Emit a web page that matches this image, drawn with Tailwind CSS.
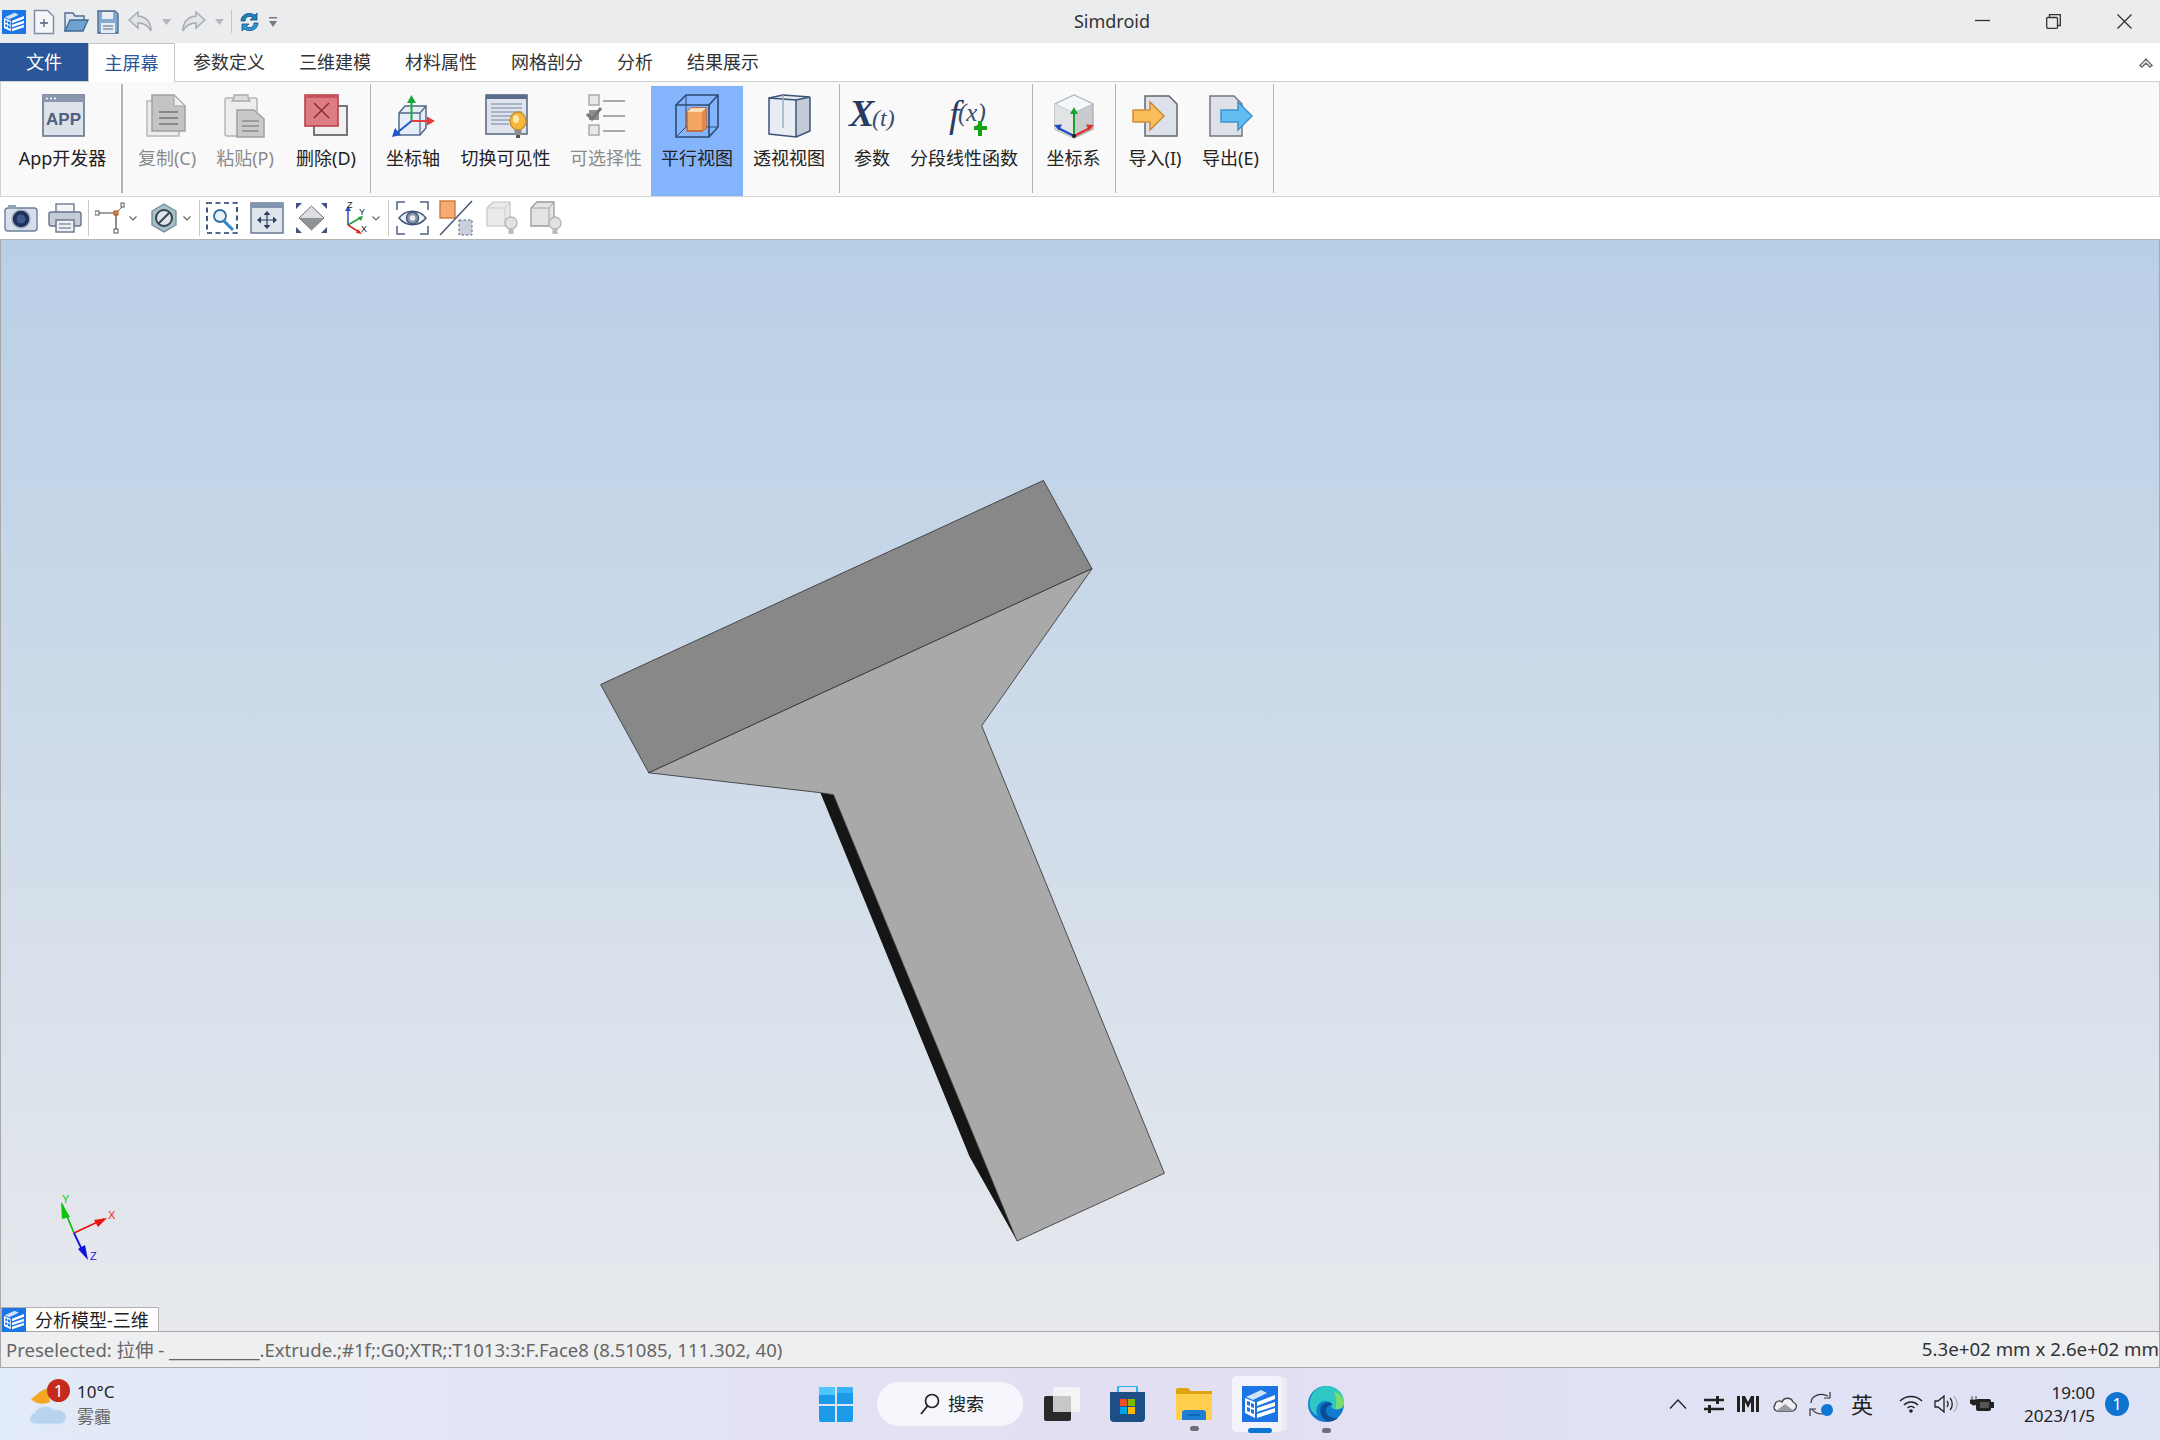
<!DOCTYPE html>
<html lang="zh-CN">
<head>
    <meta charset="UTF-8">
    <title>Simdroid</title>
    <script src="https://cdn.jsdelivr.net/npm/@tailwindcss/browser@4"></script>
</head>
<body class="m-0 overflow-hidden">
    <!-- Shared app logo -->
    <svg class="hidden">
        <symbol id="logo" viewBox="0 0 36 36">
            <rect width="36" height="36" fill="#1b75e6"/>
            <path d="M4 11 19 4l6 3-14 7z" fill="#cfe2fb"/>
            <path d="M3 12l10 4v16L3 27z" fill="#fff"/>
            <path d="M5 15l3 1v4l-3-1zM9 17l3 1v4l-3-1zM5 21l3 1v4l-3-1zM9 23l3 1v4l-3-1z" fill="#1b75e6"/>
            <path d="M15 16 33 9v4l-18 7zM15 22l18-6v4l-18 6zM15 28l18-6v4l-18 6z" fill="#fff"/>
        </symbol>
    </svg>

    <div class="w-[2160px] h-[1440px] flex flex-col text-[18px] text-[#222] font-['Noto_Sans','Noto_Sans_CJK_SC',sans-serif]">

        <!-- Title bar -->
        <div class="h-[43px] shrink-0 flex items-center bg-[#ebecee]">
            <div class="w-[1073px] flex items-center">
                <svg class="ml-[2px] w-[24px] h-[24px]"><use href="#logo"/></svg>
                <svg class="ml-[7px]" width="22" height="26" viewBox="0 0 22 26"><path d="M1.500 1.500h13l6 6v17h-19z" fill="#f4f6fa" stroke="#7d8aa3" stroke-width="1.400"/><path d="M7 14h8M11 10v8" stroke="#4f5f7c" stroke-width="1.300"/></svg>
                <svg class="ml-[9px]" width="25" height="24" viewBox="0 0 25 24"><path d="M1 21V3h8l2 3h9v4" fill="#dfe6f0" stroke="#4d6c90" stroke-width="1.400"/><path d="M1 21 6 10h18l-5 11z" fill="#6ea3cf" stroke="#3f6a92" stroke-width="1.400"/></svg>
                <svg class="ml-[8px]" width="22" height="24" viewBox="0 0 22 24"><path d="M1 1h17l3 3v19H1z" fill="#86a9cf" stroke="#4c6c92" stroke-width="1.400"/><path d="M5 2h11v7H5z" fill="#e9eef5"/><path d="M4 13h14v10H4z" fill="#e6ebf2"/><path d="M6 16h10M6 19h10" stroke="#7f93ad" stroke-width="1.300"/></svg>
                <svg class="ml-[9px]" width="25" height="22" viewBox="0 0 25 22"><path d="M10 1 1 9l9 8v-5c6 0 10 2 13 8 0-9-5-14-13-15z" fill="#e3e4e6" stroke="#a8abb0" stroke-width="1.500"/></svg>
                <svg class="ml-[9px]" width="9" height="6" viewBox="0 0 9 6"><path d="M0 0h9L4.500 6z" fill="#b4b6ba"/></svg>
                <svg class="ml-[10px]" width="25" height="22" viewBox="0 0 25 22"><path d="M15 1l9 8-9 8v-5C9 12 5 14 2 20 2 11 7 6 15 5z" fill="#e3e4e6" stroke="#a8abb0" stroke-width="1.500"/></svg>
                <svg class="ml-[9px]" width="9" height="6" viewBox="0 0 9 6"><path d="M0 0h9L4.500 6z" fill="#b4b6ba"/></svg>
                <div class="ml-[7px] w-px h-[23px] bg-[#c4c5c8]"></div>
                <svg class="ml-[7px]" width="21" height="22" viewBox="0 0 21 22"><path d="M2 10C2 4 9 0 16 4l2-2v7h-7l3-2.500C10 4 6 6 6 10z" fill="#1f7fc0" stroke="#12527e" stroke-width=".8"/><path d="M19 12c0 6-7 10-14 6l-2 2v-7h7l-3 2.500c4 2.500 8 .5 8-3.500z" fill="#2b95d6" stroke="#12527e" stroke-width=".8"/></svg>
                <svg class="ml-[9px]" width="8" height="10" viewBox="0 0 8 10"><path d="M0 0h8v1.500H0zM0 4h8L4 10z" fill="#77797d"/></svg>
            </div>
            <span class="w-[78px] text-center text-[#333] text-[18px]">Simdroid</span>
            <div class="ml-auto mr-[28px] flex items-center gap-[56px]">
                <svg width="15" height="15" viewBox="0 0 15 15"><path d="M0 6.500h15" stroke="#333" stroke-width="1.300"/></svg>
                <svg width="15" height="15" viewBox="0 0 15 15" fill="none" stroke="#333" stroke-width="1.300"><rect x=".7" y="3.500" width="10.800" height="10.800" rx="1"/><path d="M3.500 3.500V.7h10.800v10.800h-2.800"/></svg>
                <svg width="15" height="15" viewBox="0 0 15 15"><path d="M.5.5l14 14M14.500.5l-14 14" stroke="#333" stroke-width="1.300"/></svg>
            </div>
        </div>

        <!-- Ribbon tabs -->
        <div class="h-[39px] shrink-0 flex items-center bg-white border-b border-[#cfcfcf]">
            <div class="w-[88px] h-[38px] pt-[1px] flex items-center justify-center bg-[#2b579a] text-white">文件</div>
            <div class="w-[87px] h-[39px] pt-[1px] flex items-center justify-center bg-white border-x border-t border-[#c4c4c4] text-[#2b579a] relative top-[0.5px]">主屏幕</div>
            <div class="pl-[18px] pt-[1px] flex items-center gap-[34px] text-[#333]">
                <span>参数定义</span>
                <span>三维建模</span>
                <span>材料属性</span>
                <span>网格剖分</span>
                <span>分析</span>
                <span>结果展示</span>
            </div>
            <svg class="ml-auto mr-[7px]" width="14" height="11" viewBox="0 0 14 11"><path d="M1 8.500 7 2l6 6.500-2 1.500-4-4-4 4z" fill="#fff" stroke="#6d7075" stroke-width="1.500"/></svg>
        </div>

        <!-- Ribbon buttons -->
        <div class="h-[115px] shrink-0 flex bg-[#f9f9f9] border-b border-x border-[#d2d2d2] whitespace-nowrap">
            <!-- App -->
            <div class="ml-[3px] w-[117px] h-[110px] mt-[4px] flex flex-col items-center pt-[7px]">
                <svg width="46" height="46" viewBox="0 0 46 46"><rect x="3" y="2" width="41" height="41" fill="#dde1e9" stroke="#66748f" stroke-width="1.600"/><rect x="3" y="2" width="41" height="7" fill="#8a97ad"/><path d="M6 5.500h2M10 5.500h2M14 5.500h2" stroke="#fff" stroke-width="1.500"/><text x="23.500" y="32" text-anchor="middle" font-family="Liberation Sans" font-weight="700" font-size="17" fill="#50607f">APP</text></svg>
                <span class="mt-[7px] leading-[24px]">App开发器</span>
            </div>
            <div class="w-[2px] h-[109px] mt-[2px] bg-[#b4b4b4]"></div>
            <!-- Copy / paste / delete -->
            <div class="ml-[5px] w-[78px] h-[110px] mt-[4px] flex flex-col items-center pt-[7px] text-[#8b8b8b]">
                <svg width="46" height="46" viewBox="0 0 46 46"><rect x="3" y="8" width="32" height="35" fill="#ececec" stroke="#b9b9b9" stroke-width="1.500"/><path d="M8 2h22l11 11v25H8z" fill="#c4c4c4" stroke="#a0a0a0" stroke-width="1.500"/><path d="M30 2v11h11z" fill="#eee" stroke="#a0a0a0"/><path d="M15 19h19M15 25h19M15 31h19" stroke="#888" stroke-width="1.800"/></svg>
                <span class="mt-[7px] leading-[24px]">复制(C)</span>
            </div>
            <div class="w-[78px] h-[110px] mt-[4px] flex flex-col items-center pt-[7px] text-[#8b8b8b]">
                <svg width="46" height="46" viewBox="0 0 46 46"><rect x="3" y="5" width="32" height="38" rx="2" fill="#ededed" stroke="#b5b5b5" stroke-width="1.500"/><path d="M12 5V2h14v3l2 3H10z" fill="#dcdcdc" stroke="#aaa" stroke-width="1.300"/><path d="M15 17h17l10 9v18H15z" fill="#c9c9c9" stroke="#a0a0a0" stroke-width="1.500"/><path d="M20 28h17M20 33h17M20 38h17" stroke="#8d8d8d" stroke-width="1.600"/></svg>
                <span class="mt-[7px] leading-[24px]">粘贴(P)</span>
            </div>
            <div class="w-[84px] h-[110px] mt-[4px] flex flex-col items-center pt-[7px]">
                <svg width="46" height="46" viewBox="0 0 46 46"><rect x="11" y="13" width="33" height="29" fill="#f1f1f1" stroke="#6a6a6a" stroke-width="1.800"/><rect x="2" y="2" width="33" height="31" fill="#dd7c83" stroke="#b9434c" stroke-width="1.600"/><path d="M2 2h33v3H2z" fill="#c9525b"/><path d="M11 10l15 15M26 10 11 25" stroke="#8f2c34" stroke-width="1.500"/></svg>
                <span class="mt-[7px] leading-[24px]">删除(D)</span>
            </div>
            <div class="ml-[2px] w-px h-[109px] mt-[2px] bg-[#b4b4b4]"></div>
            <!-- Axis / visibility -->
            <div class="ml-[5px] w-[74px] h-[110px] mt-[4px] flex flex-col items-center pt-[7px]">
                <svg width="46" height="46" viewBox="0 0 46 46"><path d="M9 20l6-7h21v22l-6 7H9z" fill="#e6eef8" stroke="#53688a" stroke-width="1.500"/><path d="M9 20h21v22M30 20l6-7" fill="none" stroke="#53688a" stroke-width="1.300"/><path d="M21.500 28V9" stroke="#18a83e" stroke-width="2"/><path d="M21.500 2l4.500 8h-9z" fill="#18a83e"/><path d="M21.500 28H38" stroke="#e83a3a" stroke-width="2"/><path d="M45 28l-8 4.500v-9z" fill="#e83a3a"/><path d="M21.500 28 8 39" stroke="#1f58c8" stroke-width="2"/><path d="M2 44l3-9 6 7z" fill="#1f58c8"/></svg>
                <span class="mt-[7px] leading-[24px]">坐标轴</span>
            </div>
            <div class="w-[111px] h-[110px] mt-[4px] flex flex-col items-center pt-[7px]">
                <svg width="46" height="46" viewBox="0 0 46 46"><rect x="3" y="2" width="41" height="39" fill="#dfe4ec" stroke="#5a6d8c" stroke-width="1.600"/><rect x="3" y="2" width="41" height="4" fill="#5a6d8c"/><path d="M8 11h31M8 15h31M8 19h31M8 23h22M8 27h20M8 31h18" stroke="#97a4b8" stroke-width="1.500"/><ellipse cx="35" cy="28" rx="8" ry="9" fill="#f6b73c" stroke="#c68b2a" stroke-width="1.300"/><ellipse cx="33" cy="26" rx="3" ry="4" fill="#fde9a8"/><rect x="31.500" y="37" width="7" height="5" fill="#8b8d92"/><path d="M33 42h4v3h-4z" fill="#555"/></svg>
                <span class="mt-[7px] leading-[24px]">切换可见性</span>
            </div>
            <div class="w-[90px] h-[110px] mt-[4px] flex flex-col items-center pt-[7px] text-[#8b8b8b]">
                <svg width="46" height="46" viewBox="0 0 46 46"><g fill="#e8e8e8" stroke="#aaa" stroke-width="1.500"><rect x="6" y="2" width="10" height="10"/><rect x="6" y="32" width="10" height="10"/></g><rect x="6" y="17" width="10" height="10" fill="#8f8f8f"/><path d="M4 21l5 5 9-11" fill="none" stroke="#777" stroke-width="3"/><path d="M20 8h22M20 23h22M20 38h22" stroke="#a9a9a9" stroke-width="2"/></svg>
                <span class="mt-[7px] leading-[24px]">可选择性</span>
            </div>
            <!-- Parallel view is the active one -->
            <div class="w-[92px] h-[110px] mt-[4px] flex flex-col items-center pt-[7px] bg-[#84b4fb]">
                <svg width="46" height="46" viewBox="0 0 46 46"><g fill="none" stroke="#2d4a78" stroke-width="1.600"><path d="M2 12h33v32H2zM2 12 12 2h32v32L35 44M35 12l9-10"/><path d="M12 2v32h32M12 34 2 44" stroke-width="1"/></g><path d="M13 19l4-4h15v20l-4 3H13z" fill="#f3a765" stroke="#c35a22" stroke-width="1.300"/><path d="M17 15h15l-4 4H13z" fill="#fbdcb7"/><path d="M28 19l4-4v20l-4 3z" fill="#e28a45"/></svg>
                <span class="mt-[7px] leading-[24px]">平行视图</span>
            </div>
            <div class="w-[92px] h-[110px] mt-[4px] flex flex-col items-center pt-[7px]">
                <svg width="46" height="46" viewBox="0 0 46 46"><path d="M3 5l14-3 27 2v34l-14 6-27-3z" fill="#e8ecf3"/><path d="M30 7l14-3v34l-14 6z" fill="#c5cbd6"/><g fill="none" stroke="#3d5378" stroke-width="1.500"><path d="M3 5l27 2v37L3 41z"/><path d="M3 5l14-3 27 2-14 3M44 4v34l-14 6"/><path d="M17 2v33" stroke="#a0acc0"/></g></svg>
                <span class="mt-[7px] leading-[24px]">透视视图</span>
            </div>
            <div class="ml-[4px] w-px h-[109px] mt-[2px] bg-[#b4b4b4]"></div>
            <!-- Parameters -->
            <div class="ml-[5px] w-[54px] h-[110px] mt-[4px] flex flex-col items-center pt-[7px]">
                <svg width="50" height="46" viewBox="0 0 50 46"><text x="2" y="33" font-family="Liberation Serif" font-style="italic" font-weight="700" font-size="38" fill="#283c63">X</text><text x="25" y="33" font-family="Liberation Serif" font-style="italic" font-size="24" fill="#3b4d70">(t)</text></svg>
                <span class="mt-[7px] leading-[24px]">参数</span>
            </div>
            <div class="w-[130px] h-[110px] mt-[4px] flex flex-col items-center pt-[7px]">
                <svg width="48" height="46" viewBox="0 0 48 46"><text x="9" y="34" font-family="Liberation Serif" font-style="italic" font-size="38" fill="#283c63">f</text><text x="18" y="28" font-family="Liberation Serif" font-style="italic" font-size="25" fill="#3b4d70">(x)</text><path d="M32 34h4v-5h4v5h5v4h-5v6h-4v-6h-4z" fill="#12a312" transform="translate(2 -1)"/></svg>
                <span class="mt-[7px] leading-[24px]">分段线性函数</span>
            </div>
            <div class="ml-[3px] w-px h-[109px] mt-[2px] bg-[#b4b4b4]"></div>
            <!-- Coordinate system -->
            <div class="ml-[6px] w-[69px] h-[110px] mt-[4px] flex flex-col items-center pt-[7px]">
                <svg width="46" height="46" viewBox="0 0 46 46"><path d="M23 2l19 9v25l-19 9-19-9V11z" fill="#c9cbce" stroke="#a9acb1" stroke-width="1.300"/><path d="M4 11l19 9 19-9-19-9z" fill="#f5f6f7" stroke="#aeb8c6"/><path d="M23 20v25L4 36V11z" fill="#e2e3e5"/><path d="M23 42V19" stroke="#17a32a" stroke-width="2"/><path d="M23 14l4 7h-8z" fill="#17a32a"/><path d="M23 43 7 35" stroke="#1e49c2" stroke-width="2.200"/><path d="M3 32l8-.5-3 6z" fill="#1e49c2"/><path d="M23 43l16-8" stroke="#de2f2f" stroke-width="2.200"/><path d="M43 32l-8-.5 3 6z" fill="#de2f2f"/><circle cx="23" cy="43" r="2" fill="#222"/></svg>
                <span class="mt-[7px] leading-[24px]">坐标系</span>
            </div>
            <div class="ml-[7px] w-px h-[109px] mt-[2px] bg-[#b4b4b4]"></div>
            <!-- Import / export -->
            <div class="ml-[9px] w-[60px] h-[110px] mt-[4px] flex flex-col items-center pt-[7px]">
                <svg width="46" height="46" viewBox="0 0 46 46"><path d="M13 3h24l8 8v32H13z" fill="#dce1ea" stroke="#666" stroke-width="1.500"/><path d="M1 17h17v-8l14 14-14 14v-8H1z" fill="#f9bd5a" stroke="#cf8a35" stroke-width="1.500"/></svg>
                <span class="mt-[7px] leading-[24px]">导入(I)</span>
            </div>
            <div class="ml-[5px] w-[81px] h-[110px] mt-[4px] flex flex-col items-center pt-[7px]">
                <svg width="46" height="46" viewBox="0 0 46 46"><path d="M2 3h24l8 8v32H2z" fill="#dce1ea" stroke="#777" stroke-width="1.500"/><path d="M13 17h17v-8l14 14-14 14v-8H13z" fill="#62bdf0" stroke="#3b93cf" stroke-width="1.500"/></svg>
                <span class="mt-[7px] leading-[24px]">导出(E)</span>
            </div>
            <div class="ml-[2px] w-px h-[109px] mt-[2px] bg-[#b4b4b4]"></div>
        </div>

        <!-- Quick view toolbar -->
        <div class="h-[43px] shrink-0 flex items-center bg-white border-b border-[#b5b5b5] pl-[4px]">
            <svg width="34" height="28" viewBox="0 0 34 28"><rect x="1" y="4" width="32" height="23" rx="3" fill="#d8dfea" stroke="#6c7f9c" stroke-width="1.400"/><rect x="4" y="1" width="8" height="4" fill="#8fa0b8"/><circle cx="17" cy="15" r="9" fill="#1f3159" stroke="#9fb0c8" stroke-width="1.500"/><circle cx="17" cy="15" r="4.500" fill="#41598c"/></svg>
            <svg class="ml-[10px]" width="34" height="30" viewBox="0 0 34 30"><rect x="8" y="1" width="18" height="9" fill="#f4f5f7" stroke="#6d7a8d" stroke-width="1.400"/><rect x="1" y="9" width="32" height="14" rx="2" fill="#c4ccd8" stroke="#65748a" stroke-width="1.400"/><rect x="8" y="17" width="18" height="12" fill="#eef0f3" stroke="#65748a" stroke-width="1.400"/><path d="M11 21h12M11 25h12" stroke="#8896a8" stroke-width="1.300"/></svg>
            <div class="ml-[6px] w-px h-[36px] bg-[#c8c8c8]"></div>
            <svg class="ml-[6px]" width="31" height="32" viewBox="0 0 31 32"><path d="M3 11h18M21 11v17" fill="none" stroke="#444" stroke-width="1.200"/><path d="M23 9l4-4" stroke="#666" stroke-width="1"/><rect x="0" y="9" width="4" height="4" fill="#fff" stroke="#555"/><rect x="19" y="9" width="4" height="4" fill="#e8853a" stroke="#a85318"/><rect x="19" y="27" width="4" height="4" fill="#fff" stroke="#555"/><rect x="26" y="1" width="3" height="4" fill="#fff" stroke="#555"/></svg>
            <svg class="ml-[3px]" width="8" height="5" viewBox="0 0 8 5"><path d="M.5.5 4 4 7.500.5" fill="none" stroke="#666" stroke-width="1.100"/></svg>
            <svg class="ml-[14px]" width="26" height="30" viewBox="0 0 26 30"><path d="M13 1l12 7v14l-12 7-12-7V8z" fill="#a7bfc7" stroke="#6e8a96" stroke-width="1.300"/><circle cx="13" cy="15" r="8" fill="#dce5e8" stroke="#37434e" stroke-width="2"/><path d="M7.500 20.500l11-11" stroke="#37434e" stroke-width="2"/></svg>
            <svg class="ml-[6px]" width="8" height="5" viewBox="0 0 8 5"><path d="M.5.5 4 4 7.500.5" fill="none" stroke="#666" stroke-width="1.100"/></svg>
            <div class="ml-[8px] w-px h-[36px] bg-[#c8c8c8]"></div>
            <svg class="ml-[6px]" width="32" height="32" viewBox="0 0 32 32"><rect x="1" y="1" width="30" height="30" fill="none" stroke="#1f3a66" stroke-width="1.700" stroke-dasharray="5 3.500"/><circle cx="14" cy="14" r="6" fill="#e9f1f8" stroke="#2f6fa6" stroke-width="1.800"/><path d="M18 19l9 9" stroke="#2f86c8" stroke-width="3"/></svg>
            <svg class="ml-[12px]" width="34" height="32" viewBox="0 0 34 32"><rect x="1" y="1" width="32" height="30" fill="#dfe5ee" stroke="#5d708e" stroke-width="1.400"/><rect x="1" y="1" width="32" height="5" fill="#8295b0"/><path d="M17 9l3.500 4h-7zM17 27l3.500-4h-7zM7 18l4-3.500v7zM27 18l-4-3.500v7z" fill="#2c3e5f"/><path d="M17 12v12M10 18h14" stroke="#2c3e5f" stroke-width="1.200"/></svg>
            <svg class="ml-[11px]" width="33" height="32" viewBox="0 0 33 32"><path d="M16.500 4 29 16 16.500 28 4 16z" fill="#dcdee1" stroke="#6f7378"/><path d="M16.500 16 29 16 16.500 28 4 16z" fill="#8f9297"/><path d="M1 1h6L1 7zM32 1h-6l6 6zM1 31h6L1 25zM32 31h-6l6-6z" fill="#3f5478"/></svg>
            <svg class="ml-[13px]" width="27" height="34" viewBox="0 0 27 34"><path d="M7 24V9" stroke="#2156b5" stroke-width="1.500"/><path d="M7 5l3 5H4z" fill="#2156b5"/><path d="M7 24l12-7" stroke="#1e9a3a" stroke-width="1.500"/><path d="M22 15l-2 5-3-4z" fill="#1e9a3a"/><path d="M7 24l11 7" stroke="#d42b2b" stroke-width="1.500"/><path d="M21 33l-6-1 2-4z" fill="#d42b2b"/><text x="6" y="7" font-size="9" font-family="Liberation Sans" fill="#222">Z</text><text x="18" y="14" font-size="9" font-family="Liberation Sans" fill="#222">Y</text><text x="20" y="31" font-size="9" font-family="Liberation Sans" fill="#222">X</text></svg>
            <svg class="ml-[4px]" width="8" height="5" viewBox="0 0 8 5"><path d="M.5.5 4 4 7.500.5" fill="none" stroke="#666" stroke-width="1.100"/></svg>
            <div class="ml-[8px] w-px h-[36px] bg-[#c8c8c8]"></div>
            <svg class="ml-[7px]" width="33" height="34" viewBox="0 0 33 34"><path d="M1 9V1h8M24 1h8v8M32 25v8h-8M9 33H1v-8" fill="none" stroke="#4f6280" stroke-width="1.500"/><path d="M3 17c7-9 20-9 27 0-7 9-20 9-27 0z" fill="#eef2f7" stroke="#3f5478" stroke-width="1.500"/><circle cx="16.500" cy="17" r="6" fill="#8696ae" stroke="#3f5478" stroke-width="1.400"/><circle cx="16.500" cy="17" r="2.800" fill="#e8edf3"/></svg>
            <svg class="ml-[10px]" width="34" height="36" viewBox="0 0 34 36"><rect x="1" y="1" width="15" height="17" fill="#f5ab72" stroke="#c77435" stroke-width="1.300"/><rect x="20" y="20" width="13" height="15" fill="#c9d0db" stroke="#52647f" stroke-dasharray="2.500 2"/><path d="M33 1 1 35" stroke="#47597a" stroke-width="1.500"/></svg>
            <svg class="ml-[13px]" width="34" height="34" viewBox="0 0 34 34"><path d="M1 7l6-6h17v19l-5 5H1z" fill="#eaeaea" stroke="#c4c4c4" stroke-width="1.200"/><path d="M1 7h18v18M19 7l5-6" fill="none" stroke="#cdcdcd"/><circle cx="25" cy="22" r="6" fill="#e2e2e2" stroke="#b4b4b4" stroke-width="1.300"/><rect x="22.500" y="28" width="5" height="5" fill="#bbb"/></svg>
            <svg class="ml-[10px]" width="34" height="34" viewBox="0 0 34 34"><path d="M1 7l6-6h17v19l-5 5H1z" fill="#e4e4e4" stroke="#9b9b9b" stroke-width="1.300"/><path d="M1 7h18v18M19 7l5-6" fill="none" stroke="#a5a5a5"/><circle cx="25" cy="22" r="6" fill="#e2e2e2" stroke="#b4b4b4" stroke-width="1.300"/><rect x="22.500" y="28" width="5" height="5" fill="#bbb"/></svg>
        </div>

        <!-- 3D viewport -->
        <div class="relative flex-1 bg-linear-to-b from-[#b9cfe6] to-[#e7e9ed] border-x border-[#a8a8a8]">
            <svg class="absolute inset-0 w-full h-full" viewBox="1 240 2158 1091" preserveAspectRatio="none">
                <polygon points="1043.400,480.400 1092,568.700 648.800,772.800 600.600,684.500" fill="#888888" stroke="#2d2d2d" stroke-width=".8"/>
                <polygon points="820.400,792.700 833.500,794.700 1017,1241 969.500,1156.400" fill="#151515"/>
                <polygon points="648.800,772.800 1092,568.700 981.700,725.800 1164.400,1173.300 1017,1241 833.500,794.700 820.400,792.700" fill="#a9a9a9" stroke="#2d2d2d" stroke-width=".8"/>
                <!-- Orientation triad -->
                <path d="M74 1233 62 1204" stroke="#0ec40e" stroke-width="1.800"/>
                <path d="M61 1202l9 15-8 2z" fill="#0ec40e"/>
                <path d="M74 1233 104 1219" stroke="#ee1111" stroke-width="1.800"/>
                <path d="M107 1218l-9 9-4-7z" fill="#ee1111"/>
                <path d="M74 1233 84 1254" stroke="#1111dd" stroke-width="1.800"/>
                <path d="M88 1260l-10-11 7-4z" fill="#1111dd"/>
                <text x="62" y="1203" font-size="11" font-family="Liberation Sans" fill="#22cc22">Y</text>
                <text x="108" y="1219" font-size="11" font-family="Liberation Sans" fill="#ee2222">X</text>
                <text x="90" y="1260" font-size="11" font-family="Liberation Sans" fill="#2222dd">Z</text>
            </svg>
            <!-- Document tab -->
            <div class="absolute left-0 bottom-0 w-[158px] h-[24px] flex items-center bg-white border border-b-0 border-[#b0b0b0]">
                <svg class="w-[24px] h-[24px] shrink-0"><use href="#logo"/></svg>
                <span class="ml-[9px] leading-[24px] whitespace-nowrap text-[#222]">分析模型-三维</span>
            </div>
        </div>

        <!-- Status bar -->
        <div class="h-[37px] shrink-0 flex items-center justify-between bg-[#eeeff0] border-y border-x border-[#a8a8a8] pl-[5px] whitespace-nowrap">
            <span class="text-[#666] text-[18.5px]">Preselected: 拉伸 - ___________.Extrude.;#1f;:G0;XTR;:T1013:3:F.Face8 (8.51085, 111.302, 40)</span>
            <span class="text-[#333] text-[18.7px]">5.3e+02 mm x 2.6e+02 mm</span>
        </div>

        <!-- Windows taskbar -->
        <div class="h-[72px] shrink-0 flex items-center bg-linear-to-r from-[#e2ebf8] via-[#e3dff2] to-[#dfe3f6]">
            <div class="w-[819px] shrink-0 flex items-center">
                <div class="relative ml-[30px] w-[40px] h-[44px]">
                    <svg class="absolute left-0 top-0" width="40" height="44" viewBox="0 0 40 44"><path d="M18 6C10 8 6 14 1 17c4 5 13 6 19 3z" fill="#f5a623"/><path d="M6 42c-8 0-8-10-1-11 2-7 14-9 19-3 8-1 13 3 12 9-1 3-3 5-6 5z" fill="#b8d3f0" stroke="#d7e6f7"/></svg>
                    <div class="absolute left-[17px] top-[-3px] w-[23px] h-[23px] rounded-full bg-[#c42b1c] text-white flex items-center justify-center text-[17px] leading-none">1</div>
                </div>
                <div class="ml-[7px] flex flex-col">
                    <span class="text-[17px] leading-[25px] text-[#222]">10°C</span>
                    <span class="text-[17px] leading-[25px] text-[#666]">雾霾</span>
                </div>
            </div>
            <svg width="34" height="35" viewBox="0 0 34 35"><path d="M2 0h14v17H0V2a2 2 0 0 1 2-2zM18 0h14a2 2 0 0 1 2 2v15H18zM0 19h16v16H2a2 2 0 0 1-2-2zM18 19h16v14a2 2 0 0 1-2 2H18z" fill="#1a9ae8"/><path d="M2 0h14v8H0V2a2 2 0 0 1 2-2z" fill="#4fc6fb"/><path d="M18 0h14a2 2 0 0 1 2 2v4H18z" fill="#38b2f5"/></svg>
            <div class="ml-[24px] w-[146px] h-[44px] rounded-full bg-[#f6f6fc] flex items-center pl-[43px] gap-[8px]">
                <svg width="20" height="22" viewBox="0 0 20 22"><circle cx="12" cy="8" r="6.500" fill="none" stroke="#222" stroke-width="1.700"/><path d="M7.500 13 1 21" stroke="#222" stroke-width="1.900"/></svg>
                <span class="text-[#222]">搜索</span>
            </div>
            <svg class="ml-[21px]" width="36" height="34" viewBox="0 0 36 34"><rect x="0" y="9" width="27" height="25" rx="2" fill="#2a2a2a"/><rect x="9" y="0" width="27" height="25" rx="2" fill="#f4f4f6"/><rect x="9" y="9" width="18" height="16" fill="#c8c8c8"/></svg>
            <svg class="ml-[30px]" width="35" height="36" viewBox="0 0 35 36"><path d="M8 6V2a2 2 0 0 1 2-2h15a2 2 0 0 1 2 2v4" fill="none" stroke="#22b6e8" stroke-width="2"/><path d="M0 6h35v26a4 4 0 0 1-4 4H4a4 4 0 0 1-4-4z" fill="#1d4e86"/><rect x="10" y="13" width="7" height="7" fill="#f25022"/><rect x="18" y="13" width="7" height="7" fill="#7fba00"/><rect x="10" y="21" width="7" height="7" fill="#00a4ef"/><rect x="18" y="21" width="7" height="7" fill="#ffb900"/></svg>
            <div class="relative ml-[31px] w-[36px] h-[32px]">
                <svg width="36" height="32" viewBox="0 0 36 32"><path d="M0 2a2 2 0 0 1 2-2h10l3 3h21v6H0z" fill="#e0a312"/><path d="M0 6h36v26H0z" fill="#ffcf4d"/><path d="M6 32v-7a3 3 0 0 1 3-3h18a3 3 0 0 1 3 3v7z" fill="#1d7fd4"/><path d="M12 27h12" stroke="#0d5fa8" stroke-width="1.500"/></svg>
                <div class="absolute left-[14px] top-[38px] w-[9px] h-[5px] rounded-full bg-[#6e6e78]"></div>
            </div>
            <div class="relative ml-[20px] w-[50px] h-[56px] rounded-[5px] bg-[#f3f3fb] flex pl-[10px] pt-[10px] shadow-[6px_0_0_-1px_#eceaf7]">
                <svg class="w-[36px] h-[36px]"><use href="#logo"/></svg>
                <div class="absolute left-[16px] bottom-[-1px] w-[24px] h-[5px] rounded-full bg-[#0a78d4]"></div>
            </div>
            <div class="relative ml-[26px] w-[36px] h-[36px]">
                <svg width="36" height="36" viewBox="0 0 36 36"><circle cx="18" cy="18" r="18" fill="#0f7ccf"/><path d="M2 14C4 5 11 0 19 0c9 0 17 7 17 16 0 6-5 8-9 7-4 0-4-3-3-5-2-4-12-5-15 3-1 3-1 6 1 9C5 28 0 22 2 14z" fill="#2fc7c4"/><path d="M26 5c6 3 10 7 10 12 0 5-5 7-9 6 2-4 2-10-1-18z" fill="#7bdc6a"/><path d="M13 21c2-5 9-6 12-2-3-1-7 1-7 6 0 4 5 8 12 7-3 3-8 4-12 3-4-3-7-9-5-14z" fill="#0a4f93"/></svg>
                <div class="absolute left-[14px] top-[42px] w-[9px] h-[5px] rounded-full bg-[#6e6e78]"></div>
            </div>
            <!-- Tray -->
            <svg class="ml-[325px]" width="18" height="10" viewBox="0 0 18 10"><path d="M1 9.500 9 1l8 8.500" fill="none" stroke="#222" stroke-width="1.300"/></svg>
            <svg class="ml-[17px]" width="20" height="17" viewBox="0 0 20 17"><path d="M0 4h20M0 13h20" stroke="#222" stroke-width="2.600" stroke-linecap="round"/><rect x="12" y="0" width="3" height="8" fill="#222"/><rect x="4" y="9" width="3" height="8" fill="#222"/></svg>
            <svg class="ml-[13px]" width="22" height="16" viewBox="0 0 22 16"><path d="M0 0h3v16H0zM5 0h3l3 6 3-6h3v16h-3V6l-3 6-3-6v10H5zM19 0h3v16h-3z" fill="#222"/></svg>
            <svg class="ml-[14px]" width="24" height="16" viewBox="0 0 24 16"><path d="M5 15C1 15 0 11 2 9c0-4 5-5 7-3 2-5 9-5 11 0 3 1 4 4 3 6-1 2-2 3-4 3z" fill="#eef0f6" stroke="#444" stroke-width="1.300"/><path d="M3 15 12 8l9 7z" fill="#9a9a9f"/></svg>
            <svg class="ml-[12px]" width="24" height="24" viewBox="0 0 24 24"><path d="M2 11C2 4 11 0 19 4M22 13c-1 0-1 8-9 9-5 0-8-2-10-5" fill="none" stroke="#333" stroke-width="1.200"/><path d="M21 0v6h-6M1 24v-7h6" fill="none" stroke="#333" stroke-width="1.200"/><circle cx="18" cy="18" r="6" fill="#0a78d4"/></svg>
            <span class="ml-[18px] text-[22px] leading-none text-[#222]">英</span>
            <svg class="ml-[26px]" width="24" height="18" viewBox="0 0 24 18"><g fill="none" stroke="#222" stroke-width="1.400"><path d="M1 6c6-6 16-6 22 0"/><path d="M5 10c4-4 10-4 14 0"/><path d="M8.500 13c2-2 5-2 7 0"/></g><circle cx="12" cy="16" r="1.800" fill="#222"/></svg>
            <svg class="ml-[11px]" width="24" height="18" viewBox="0 0 24 18"><path d="M1 6h3l6-5v16l-6-5H1z" fill="none" stroke="#222" stroke-width="1.300"/><path d="M13 6c1.500 2 1.500 4 0 6M16 3c3 3 3 9 0 12" fill="none" stroke="#222" stroke-width="1.300"/><path d="M20 1c4 5 4 11 0 16" fill="none" stroke="#aaa" stroke-width="1.200"/></svg>
            <svg class="ml-[12px]" width="24" height="17" viewBox="0 0 24 17"><rect x="6" y="3" width="15" height="12" rx="2" fill="#222"/><rect x="21" y="6" width="3" height="6" fill="#222"/><rect x="10" y="6" width="9" height="6" fill="#555"/><path d="M2 0v4M6 0v4M0 4h8v3l-3 2H3L0 7z" fill="#222" stroke="#222" stroke-width=".8"/></svg>
            <div class="ml-auto flex flex-col items-end text-[#222] text-[17px] leading-[23px]">
                <span>19:00</span>
                <span>2023/1/5</span>
            </div>
            <div class="ml-[10px] mr-[31px] w-[24px] h-[24px] rounded-full bg-[#0f73d0] text-white text-[16px] leading-none flex items-center justify-center">1</div>
        </div>
    </div>
</body>
</html>
